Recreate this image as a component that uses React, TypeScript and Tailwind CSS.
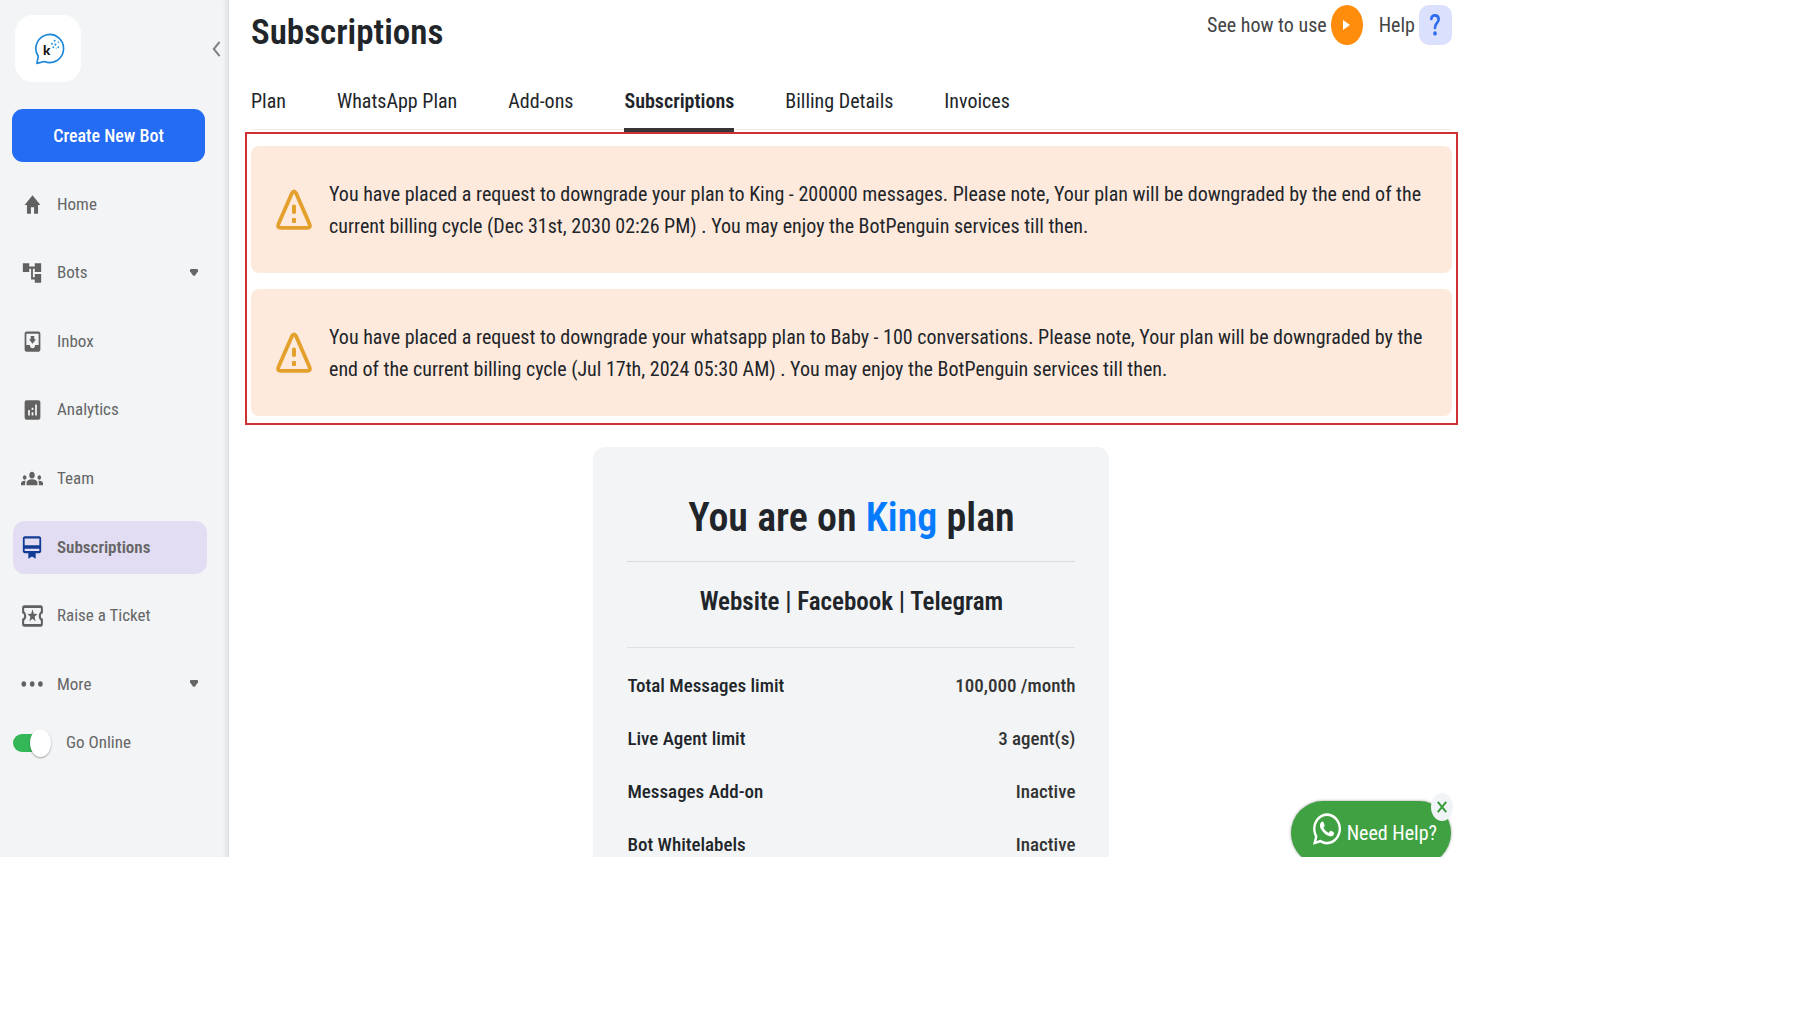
import type { ComponentType, SVGProps } from 'react';
import {
  MdHome,
  MdAccountTree,
  MdMoveToInbox,
  MdAnalytics,
  MdGroups,
  MdCardMembership,
  MdOutlineLocalActivity,
} from 'react-icons/md';
import { FaWhatsapp } from 'react-icons/fa';

type IconType = ComponentType<SVGProps<SVGSVGElement>>;

function Dots(props: SVGProps<SVGSVGElement>) {
  return (
    <svg viewBox="0 0 22 6" fill="currentColor" {...props}>
      <ellipse cx="2.8" cy="3" rx="2.3" ry="2.8" />
      <ellipse cx="11.2" cy="3" rx="2.3" ry="2.8" />
      <ellipse cx="19.4" cy="3" rx="2.3" ry="2.8" />
    </svg>
  );
}

const navItems: { label: string; icon: IconType; size: string; active?: boolean; menu?: boolean }[] = [
  { label: 'Home', icon: MdHome as IconType, size: 'h-[26px] w-[19px]' },
  { label: 'Bots', icon: MdAccountTree as IconType, size: 'h-[26px] w-[22px]', menu: true },
  { label: 'Inbox', icon: MdMoveToInbox as IconType, size: 'h-[27px] w-[21px]' },
  { label: 'Analytics', icon: MdAnalytics as IconType, size: 'h-[26px] w-[21px]' },
  { label: 'Team', icon: MdGroups as IconType, size: 'h-[27px] w-[22px]' },
  { label: 'Subscriptions', icon: MdCardMembership as IconType, size: 'h-[27px] w-[22px]', active: true },
  { label: 'Raise a Ticket', icon: MdOutlineLocalActivity as IconType, size: 'h-8 w-[25px]' },
  { label: 'More', icon: Dots, size: 'h-1.5 w-[22px]', menu: true },
];

const tabs = ['Plan', 'WhatsApp Plan', 'Add-ons', 'Subscriptions', 'Billing Details', 'Invoices'];

const alerts = [
  'You have placed a request to downgrade your plan to King - 200000 messages. Please note, Your plan will be downgraded by the end of the current billing cycle (Dec 31st, 2030 02:26 PM) . You may enjoy the BotPenguin services till then.',
  'You have placed a request to downgrade your whatsapp plan to Baby - 100 conversations. Please note, Your plan will be downgraded by the end of the current billing cycle (Jul 17th, 2024 05:30 AM) . You may enjoy the BotPenguin services till then.',
];

const limits = [
  ['Total Messages limit', '100,000 /month'],
  ['Live Agent limit', '3 agent(s)'],
  ['Messages Add-on', 'Inactive'],
  ['Bot Whitelabels', 'Inactive'],
];

function Logo() {
  return (
    <svg viewBox="0 0 30 31" className="ml-1 h-8 w-8" aria-hidden="true">
      <path
        d="M2.3 29.4 3.6 22.6A13.4 13.6 0 1 1 9.6 27.6Z"
        fill="none"
        stroke="#1c87d8"
        strokeWidth="1.6"
        strokeLinejoin="round"
      />
      <text x="8.2" y="21.4" fontSize="13" fontWeight="900" fontFamily="Lato, sans-serif" fill="#111">
        k
      </text>
      <g fill="#2f97e0">
        <circle cx="17" cy="10.5" r="1" />
        <circle cx="19.5" cy="7.5" r="1" />
        <circle cx="20.2" cy="11.2" r="1.1" />
        <circle cx="23.2" cy="9" r="0.8" />
        <circle cx="18.2" cy="13.8" r="0.9" />
        <circle cx="23" cy="13.8" r="0.9" />
        <circle cx="21" cy="14.8" r="0.5" />
      </g>
    </svg>
  );
}

function Caret() {
  return (
    <svg viewBox="0 0 8 7" className="mb-0.5 ml-auto h-[7px] w-2" fill="#666" aria-hidden="true">
      <path d="M1 0h6Q8 0 8 1V2.2L5.2 6.2q-1.2 1.2-2.4 0L0 2.2V1Q0 0 1 0Z" />
    </svg>
  );
}

function Sidebar() {
  return (
    <aside className="relative z-10 flex w-[229px] shrink-0 flex-col bg-[#f2f4f6] shadow-[inset_-6px_0_6px_-5px_rgba(0,0,0,0.14)]">
      <div className="flex items-start justify-between pt-[15px] pr-2 pl-[15px]">
        <a
          href="#home"
          aria-label="Home"
          className="flex h-[67px] w-[66px] items-center justify-center rounded-[18px] bg-white"
        >
          <Logo />
        </a>
        <button type="button" aria-label="Collapse sidebar" className="mt-[25px]">
          <svg viewBox="0 0 9 18" className="h-[18px] w-[9px]" fill="none" stroke="#808080" strokeWidth="2">
            <path d="M7.6 1.8 1.8 9l5.8 7.2" />
          </svg>
        </button>
      </div>

      <button
        type="button"
        className="mt-[27px] ml-3 h-[53px] w-[193px] rounded-[11px] bg-[#236cf3] text-lg font-medium text-white"
      >
        Create New Bot
      </button>

      <nav className="mt-4 mr-[22px] ml-[13px] flex h-[533px] flex-col justify-between">
        {navItems.map(({ label, icon: Icon, size, active, menu }) => (
          <a
            key={label}
            href={'#' + label.toLowerCase().replaceAll(' ', '-')}
            aria-current={active ? 'page' : undefined}
            className={
              'flex h-[53px] items-center rounded-xl pr-[9px] pl-2 text-[17px] text-[#666] ' +
              (active ? 'bg-[#e3ddf3] font-semibold' : '')
            }
          >
            <span
              className={
                'mr-3.5 flex w-[22px] shrink-0 justify-center ' + (active ? 'text-[#123c96]' : 'text-[#616161]')
              }
            >
              <Icon preserveAspectRatio="none" aria-hidden="true" className={'shrink-0 ' + size} />
            </span>
            {label}
            {menu && <Caret />}
          </a>
        ))}
      </nav>

      <label className="mt-[19px] ml-[13px] flex items-center text-[17px] text-[#666]">
        <input type="checkbox" role="switch" defaultChecked className="sr-only" />
        <span className="mr-[15px] flex h-[18px] w-[38px] items-center rounded-l-full bg-[linear-gradient(to_right,#34b757_28px,transparent_28px)]">
          <span className="ml-auto h-7 w-[21px] rounded-[50%] bg-white shadow-[0_1px_2px_rgba(0,0,0,0.35)]" />
        </span>
        Go Online
      </label>
    </aside>
  );
}

function WarningIcon() {
  return (
    <svg viewBox="0 0 36 42" className="h-[42px] w-9 shrink-0" aria-hidden="true">
      <path
        d="M15.9 4.2 2.8 34.3q-1.9 4.6 1.4 4.6h27.6q3.3 0 1.4-4.6L20.1 4.2q-2.1-3.4-4.2 0Z"
        fill="none"
        stroke="#e3a02c"
        strokeWidth="3.8"
        strokeLinejoin="round"
      />
      <rect x="16" y="15.5" width="4" height="9.5" rx="1.8" fill="#e3a02c" />
      <rect x="16" y="29" width="4" height="5" rx="0.8" fill="#e3a02c" />
    </svg>
  );
}

export default function App() {
  return (
    <div className="min-h-screen bg-white font-['Roboto_Condensed','Roboto',sans-serif] text-[#212529]">
      <div className="relative flex h-[84vh] w-[81%] overflow-hidden">
        <Sidebar />

        <main className="min-w-0 flex-1 pr-[5px] pl-4">
          <header className="flex items-start justify-between pr-1.5 pl-1.5">
            <h1 className="pt-[11px] text-[35px] leading-[44px] font-semibold">Subscriptions</h1>
            <div className="flex items-center pt-[5px] text-xl text-[#444]">
              <a href="#tour" className="flex items-center gap-1">
                See how to use
                <span className="flex h-10 w-8 items-center justify-center rounded-[50%] bg-[#ff8c0a]">
                  <svg viewBox="0 0 7 10" className="h-2.5 w-[7px]" fill="#fff" aria-hidden="true">
                    <path d="M0 0 7 5 0 10Z" />
                  </svg>
                </span>
              </a>
              <a href="#help" className="ml-4 flex items-center gap-1">
                Help
                <span className="flex h-10 w-[33px] items-center justify-center rounded-[10px] bg-[#dbe0fd]">
                  <svg viewBox="0 0 10 22" className="h-[22px] w-2.5" fill="none" aria-hidden="true">
                    <path
                      d="M1.3 5Q1.6 1.4 5 1.4T8.7 5.2C8.7 8.6 5 8.8 5 14"
                      stroke="#2b6cf0"
                      strokeWidth="2.6"
                      strokeLinecap="round"
                    />
                    <ellipse cx="5" cy="19.4" rx="1.8" ry="2.2" fill="#2b6cf0" />
                  </svg>
                </span>
              </a>
            </div>
          </header>

          <nav className="mr-1.5 ml-1.5 flex gap-[51px] border-b border-[#eee] pt-7 text-xl">
            {tabs.map((tab) => (
              <a
                key={tab}
                href={'#' + tab.toLowerCase().replaceAll(' ', '-')}
                className={
                  '-mb-[3px] h-[49px] border-b-4 pt-1 ' +
                  (tab === 'Subscriptions' ? 'border-[#373435] font-semibold' : 'border-transparent')
                }
              >
                {tab}
              </a>
            ))}
          </nav>

          <section className="mt-0.5 flex flex-col gap-4 border-2 border-[#cf3133] px-1 pt-3 pb-[7px]">
            {alerts.map((text) => (
              <div
                key={text}
                role="alert"
                className="flex items-center gap-[17px] rounded-lg bg-[#feeadd] pt-8 pr-6 pb-[31px] pl-[25px]"
              >
                <WarningIcon />
                <p className="text-xl leading-8">{text}</p>
              </div>
            ))}
          </section>

          <section className="mx-auto mt-[22px] w-[516px] rounded-xl bg-[#f2f4f6] px-[34px] pt-[45px]">
            <h2 className="h-[70px] border-b border-[#d9dcdf] text-center text-[40px] leading-[52px] font-semibold">
              You are on <span className="text-[#067bff]">King</span> plan
            </h2>
            <h3 className="h-[86px] border-b border-[#dfe1e4] pt-5 text-center text-[25px] leading-10 font-semibold">
              Website | Facebook | Telegram
            </h3>
            <table className="mt-3 w-full text-[19px] font-medium">
              <tbody>
                {limits.map(([name, value]) => (
                  <tr key={name} className="h-[53px]">
                    <th scope="row" className="text-left font-medium">
                      {name}
                    </th>
                    <td className="text-right text-[#333]">{value}</td>
                  </tr>
                ))}
              </tbody>
            </table>
          </section>
        </main>

        <div className="absolute right-3 -bottom-2 z-20">
          <a
            href="#whatsapp"
            className="flex h-16 w-40 items-center justify-center gap-1.5 rounded-full bg-[#3fa142] pl-2 text-xl text-white shadow-[0_0_3px_rgba(0,0,0,0.4)]"
          >
            <FaWhatsapp preserveAspectRatio="none" className="mb-2 h-9 w-7" aria-hidden="true" />
            Need Help?
          </a>
          <button
            type="button"
            aria-label="Close"
            className="absolute -top-2 -right-0.5 flex h-7 w-[22px] items-center justify-center rounded-[50%] bg-[#f1f4f6]"
          >
            <svg viewBox="0 0 10 12" className="h-3 w-2.5" stroke="#379a3c" strokeWidth="2" aria-hidden="true">
              <path d="M.8.8 9.2 11.2M9.2.8.8 11.2" />
            </svg>
          </button>
        </div>
      </div>
    </div>
  );
}
